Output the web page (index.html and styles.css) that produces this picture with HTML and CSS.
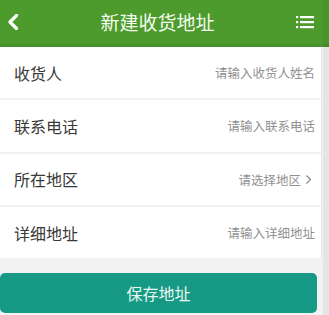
FILE: index.html
```html
<!DOCTYPE html>
<html lang="zh-CN">
<head>
<meta charset="utf-8">
<title>新建收货地址</title>
<link rel="stylesheet" href="styles.css">
</head>
<body>
<div class="page">
  <header class="topbar">
    <span class="back">
      <svg width="12" height="16" viewBox="0 0 12 16"><path d="M9.5 1.5 L3 8 L9.5 14.5" fill="none" stroke="#fff" stroke-width="3.2" stroke-linecap="round" stroke-linejoin="round"/></svg>
    </span>
    <h1 class="title">新建收货地址</h1>
    <span class="menu">
      <svg width="18" height="14" viewBox="0 0 18 14"><g fill="#fff"><rect x="0" y="1" width="2.2" height="2.2"/><rect x="4" y="1" width="14" height="2.2"/><rect x="0" y="6" width="2.2" height="2.2"/><rect x="4" y="6" width="14" height="2.2"/><rect x="0" y="11" width="2.2" height="2.2"/><rect x="4" y="11" width="14" height="2.2"/></g></svg>
    </span>
  </header>
  <div class="form">
    <div class="row"><span class="label">收货人</span><span class="hint">请输入收货人姓名</span></div>
    <div class="row"><span class="label">联系电话</span><span class="hint">请输入联系电话</span></div>
    <div class="row"><span class="label">所在地区</span><span class="hint">请选择地区<svg class="arrow" width="7" height="11" viewBox="0 0 7 11"><path d="M1.5 1.5 L5.5 5.5 L1.5 9.5" fill="none" stroke="#888" stroke-width="1.2"/></svg></span></div>
    <div class="row"><span class="label">详细地址</span><span class="hint">请输入详细地址</span></div>
  </div>
  <div class="actions">
    <button class="save">保存地址</button>
  </div>
  <div class="rail"></div>
</div>
</body>
</html>
```
FILE: styles.css
```css
* { box-sizing: border-box; }
html, body { margin: 0; padding: 0; }
body {
  width: 329px;
  height: 315px;
  overflow: hidden;
  background: #f2f2f2;
  font-family: "Noto Sans CJK SC", "Noto Sans", sans-serif;
}
.page {
  position: relative;
  width: 329px;
  height: 315px;
}
.topbar {
  height: 47px;
  background: #4d9b2d;
  border-bottom: 3px solid #47922a;
  display: flex;
  align-items: center;
  justify-content: space-between;
  padding: 0 15px 0 7px;
  color: #fff;
}
.back { display: flex; width: 12px; }
.menu { display: flex; width: 18px; }
.title {
  margin: 0 0 1px 0;
  font-size: 19px;
  font-weight: normal;
  color: #f4fbef;
  letter-spacing: 0;
}
.form {
  width: 322px;
  background: #fff;
  border-right: 1px solid #e8e8e8;
}
.row {
  height: 53.3px;
  display: flex;
  align-items: center;
  justify-content: space-between;
  padding: 0 6px 0 14px;
  border-bottom: 2px solid #f1f1f1;
}
.label {
  font-size: 16px;
  color: #383838;
}
.hint {
  font-size: 12.5px;
  color: #919191;
  display: flex;
  align-items: center;
}
.arrow { margin-left: 4px; margin-right: 3px; }
.actions {
  width: 322px;
  padding: 13px 5px 0 0;
}
.save {
  display: block;
  width: 317px;
  height: 40px;
  border: 0;
  border-radius: 5px;
  background: #179a85;
  color: #e9f7f3;
  font-family: "Noto Sans CJK SC", "Noto Sans", sans-serif;
  font-size: 16px;
  padding: 0;
}
.rail {
  position: absolute;
  top: 0;
  right: 0;
  bottom: 0;
  width: 6px;
  background: rgba(0, 0, 0, 0.05);
}
```
